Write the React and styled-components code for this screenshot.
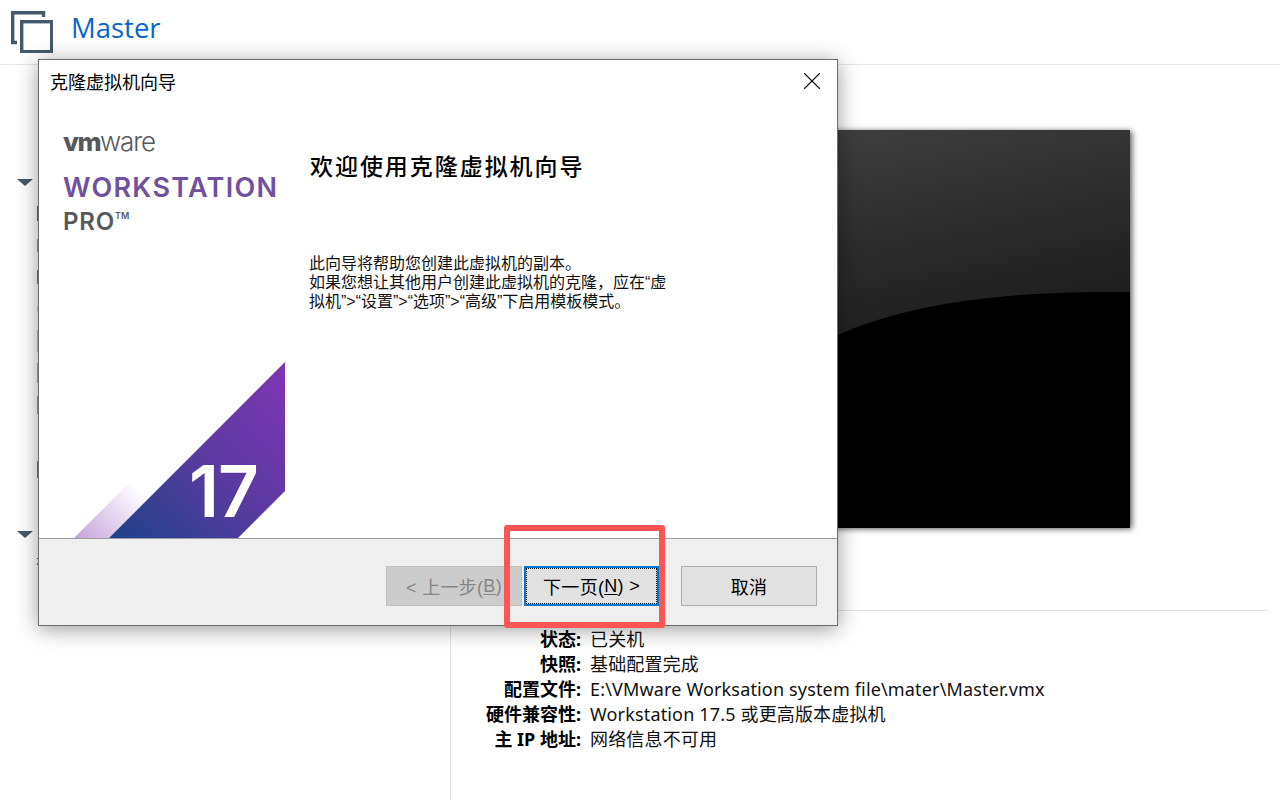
import React from "react";
import styled, { createGlobalStyle } from "styled-components";
import { X } from "lucide-react";

const GlobalStyle = createGlobalStyle`
  html, body {
    margin: 0;
    padding: 0;
    background: #fff;
  }
  body {
    font-family: "Liberation Sans", "Noto Sans CJK SC", sans-serif;
    color: #000;
    overflow: hidden;
  }
`;

const Page = styled.div`
  position: relative;
  width: 1280px;
  height: 800px;
  display: flex;
  flex-direction: column;
  overflow: hidden;
`;

const Header = styled.header`
  height: 53px;
  flex: none;
  display: flex;
  align-items: flex-start;
  gap: 18px;
  padding: 11px 0 0 11px;
  border-bottom: 1px solid #e6e6e6;
`;

const VmTitle = styled.h1`
  margin: 0;
  font-family: "Open Sans", sans-serif;
  font-weight: 400;
  font-size: 27.5px;
  line-height: 34px;
  color: #0765cf;
`;

const Columns = styled.div`
  flex: 1;
  display: flex;
  min-height: 0;
`;

const Sidebar = styled.aside`
  width: 451px;
  flex: none;
  padding: 114px 0 0 17px;
  box-sizing: border-box;
  border-right: 1px solid #e3e3e3;
`;

const Caret = styled.div`
  width: 0;
  height: 0;
  border-left: 8px solid transparent;
  border-right: 8px solid transparent;
  border-top: 7px solid #44596a;
`;

const DeviceList = styled.div`
  margin: 11px 0 0 20px;
  display: flex;
  flex-direction: column;
`;

const DeviceRow = styled.div`
  height: 32px;
  display: flex;
  align-items: center;
`;

const DeviceIcon = styled.span`
  width: 16px;
  height: ${({ $h }) => $h}px;
  background: ${({ $tone }) => $tone};
`;

const NotesSection = styled.section`
  margin-top: 46px;
`;

const NotesHint = styled.p`
  margin: 15px 0 0 19px;
  font-size: 15px;
  line-height: 20px;
  color: #555;
`;

const Main = styled.main`
  flex: 1;
  display: flex;
  flex-direction: column;
  padding: 65px 13px 0 0;
  min-width: 0;
`;

const PreviewWrap = styled.div`
  display: flex;
  justify-content: center;
  padding-left: 11px;
  height: 481px;
  box-sizing: border-box;
  border-bottom: 1px solid #e3e3e3;
`;

const Preview = styled.div`
  width: 530px;
  height: 398px;
  background: linear-gradient(168deg, #454545 0%, #000 95%);
  box-shadow: 2px 1px 6px rgba(0, 0, 0, 0.65);
  svg {
    display: block;
  }
`;

const InfoGrid = styled.dl`
  margin: 16px 0 0;
  display: grid;
  grid-template-columns: 130px auto;
  column-gap: 9px;
  justify-content: start;
  font-family: "Noto Sans", "Noto Sans CJK SC", sans-serif;
  font-size: 18px;
  line-height: 25px;
`;

const InfoLabel = styled.dt`
  text-align: right;
  font-weight: 700;
`;

const InfoValue = styled.dd`
  margin: 0;
  color: #111;
  white-space: nowrap;
  letter-spacing: 0.16px;
`;

const Dialog = styled.div`
  position: absolute;
  left: 38px;
  top: 59px;
  width: 800px;
  height: 567px;
  box-sizing: border-box;
  border: 1px solid #6e6e6e;
  background: #fff;
  display: flex;
  flex-direction: column;
  box-shadow: 0 3px 20px rgba(0, 0, 0, 0.4);
`;

const TitleBar = styled.div`
  height: 44px;
  flex: none;
  display: flex;
  align-items: center;
  justify-content: space-between;
  padding: 0 10px 3px 11px;
  box-sizing: border-box;
  font-size: 18px;
`;

const DialogBody = styled.div`
  flex: 1;
  display: flex;
  min-height: 0;
`;

const Banner = styled.div`
  position: relative;
  width: 246px;
  flex: none;
  padding: 23px 0 0 24px;
  box-sizing: border-box;
`;

const VmwareMark = styled.div`
  font-family: Inter, sans-serif;
  font-size: 26px;
  line-height: 30px;
  letter-spacing: -1.2px;
  color: #58595b;
`;

const VmPart = styled.span`
  font-weight: 800;
  letter-spacing: -1.5px;
`;

const WarePart = styled.span`
  font-weight: 300;
`;

const ProductName = styled.div`
  margin-top: 15px;
  font-family: Inter, sans-serif;
  font-size: 27px;
  line-height: 32px;
  font-weight: 600;
  letter-spacing: 1.3px;
  color: #6f51a0;
  white-space: nowrap;
`;

const Edition = styled.div`
  margin-top: 3px;
  font-family: Inter, sans-serif;
  font-size: 24px;
  line-height: 30px;
  font-weight: 600;
  letter-spacing: 0.8px;
  color: #58595b;
  sup {
    font-size: 9px;
    line-height: 0;
    vertical-align: 11px;
    letter-spacing: 0;
  }
`;

const Swoosh = styled.svg`
  position: absolute;
  left: 0;
  bottom: 0;
  display: block;
`;

const Welcome = styled.div`
  flex: 1;
  padding: 46px 0 0 25px;
`;

const WelcomeTitle = styled.h2`
  margin: 0;
  font-family: "Noto Sans CJK SC", sans-serif;
  font-size: 23px;
  line-height: 30px;
  font-weight: 500;
  letter-spacing: 1.95px;
`;

const WelcomeText = styled.p`
  margin: 74px 0 0 -1px;
  font-size: 16px;
  line-height: 19px;
  white-space: nowrap;
  color: #111;
`;

const Footer = styled.div`
  height: 87px;
  flex: none;
  box-sizing: border-box;
  border-top: 1px solid #9c9c9c;
  background: #efefef;
  display: flex;
  justify-content: flex-end;
  align-items: flex-start;
  padding: 27px 20px 0 0;
`;

const WizardButton = styled.div`
  width: ${({ $w }) => $w || 136}px;
  height: 40px;
  margin-left: ${({ $gap }) => $gap || 0}px;
  box-sizing: border-box;
  border: 1px solid ${({ $off }) => ($off ? "#bfbfbf" : "#adadad")};
  background: ${({ $off }) => ($off ? "#cccccc" : "#e1e1e1")};
  color: ${({ $off }) => ($off ? "#858585" : "#000")};
  display: flex;
  align-items: center;
  justify-content: center;
  font-size: 18px;
  letter-spacing: 0.3px;
  ${({ $focus }) =>
    $focus &&
    `
    border: 2px solid #0078d7;
    outline: 1px dotted #111;
    outline-offset: -3px;
  `}
  u {
    text-underline-offset: 2px;
  }
`;

const Callout = styled.div`
  position: absolute;
  left: 504px;
  top: 525px;
  width: 161px;
  height: 103px;
  box-sizing: border-box;
  border: 6px solid #fd5454;
  border-radius: 3px;
`;

const CopyIcon = () => (
  <svg width="42" height="42" viewBox="0 0 42 42" fill="none" stroke="#44596a" strokeWidth="3.4">
    <path d="M6 31.5H1.7V1.7H32.5V6" />
    <rect x="10.7" y="10.7" width="30" height="30" />
  </svg>
);

const devices = [
  { h: 15, tone: "#666" },
  { h: 13, tone: "#999" },
  { h: 14, tone: "#777" },
  { h: 6, tone: "#ccc" },
  { h: 22, tone: "#bbb" },
  { h: 20, tone: "#aaa" },
  { h: 18, tone: "#999" },
  { h: 0, tone: "transparent" },
  { h: 17, tone: "#777" },
];

const info = [
  ["状态:", "已关机"],
  ["快照:", "基础配置完成"],
  ["配置文件:", "E:\\VMware Worksation system file\\mater\\Master.vmx"],
  ["硬件兼容性:", "Workstation 17.5 或更高版本虚拟机"],
  ["主 IP 地址:", "网络信息不可用"],
];

export default function App() {
  return (
    <Page>
      <GlobalStyle />
      <Header>
        <CopyIcon />
        <VmTitle>Master</VmTitle>
      </Header>
      <Columns>
        <Sidebar>
          <Caret />
          <DeviceList>
            {devices.map((d, i) => (
              <DeviceRow key={i}>
                <DeviceIcon $h={d.h} $tone={d.tone} />
              </DeviceRow>
            ))}
          </DeviceList>
          <NotesSection>
            <Caret />
            <NotesHint>在</NotesHint>
          </NotesSection>
        </Sidebar>
        <Main>
          <PreviewWrap>
            <Preview>
              <svg width="530" height="398" viewBox="0 0 530 398">
                <path d="M0 305 C 90 262 170 205 238 205 C 320 168 430 161 530 162 V398 H0 Z" fill="#000" />
              </svg>
            </Preview>
          </PreviewWrap>
          <InfoGrid>
            {info.map(([label, value]) => (
              <React.Fragment key={label}>
                <InfoLabel>{label}</InfoLabel>
                <InfoValue>{value}</InfoValue>
              </React.Fragment>
            ))}
          </InfoGrid>
        </Main>
      </Columns>

      <Dialog>
        <TitleBar>
          <span>克隆虚拟机向导</span>
          <X size={30} strokeWidth={0.9} color="#111" />
        </TitleBar>
        <DialogBody>
          <Banner>
            <VmwareMark>
              <VmPart>vm</VmPart>
              <WarePart>ware</WarePart>
            </VmwareMark>
            <ProductName>WORKSTATION</ProductName>
            <Edition>
              PRO<sup>TM</sup>
            </Edition>
            <Swoosh width="246" height="177" viewBox="0 0 246 177">
              <defs>
                <linearGradient id="plate" x1="70" y1="177" x2="246" y2="0" gradientUnits="userSpaceOnUse">
                  <stop offset="0" stopColor="#1d4289" />
                  <stop offset="0.5" stopColor="#5a3aa0" />
                  <stop offset="1" stopColor="#8034b3" />
                </linearGradient>
                <linearGradient id="fade" x1="35" y1="177" x2="95" y2="122" gradientUnits="userSpaceOnUse">
                  <stop offset="0" stopColor="#c5a3da" />
                  <stop offset="1" stopColor="#ffffff" />
                </linearGradient>
              </defs>
              <polygon points="35,177 70,177 132,115 97,115" fill="url(#fade)" />
              <polygon points="70,177 246,1 246,130 199,177" fill="url(#plate)" />
              <text x="150" y="156" fontFamily="Inter, sans-serif" fontSize="71" fontWeight="600" fill="#fff" letterSpacing="-1">
                17
              </text>
            </Swoosh>
          </Banner>
          <Welcome>
            <WelcomeTitle>欢迎使用克隆虚拟机向导</WelcomeTitle>
            <WelcomeText>
              此向导将帮助您创建此虚拟机的副本。
              <br />
              如果您想让其他用户创建此虚拟机的克隆，应在“虚
              <br />
              拟机”&gt;“设置”&gt;“选项”&gt;“高级”下启用模板模式。
            </WelcomeText>
          </Welcome>
        </DialogBody>
        <Footer>
          <WizardButton $off>
            &lt; 上一步(<u>B</u>)
          </WizardButton>
          <WizardButton $focus $w={135} $gap={2}>
            下一页(<u>N</u>) &gt;
          </WizardButton>
          <WizardButton $gap={22}>取消</WizardButton>
        </Footer>
      </Dialog>

      <Callout />
    </Page>
  );
}
